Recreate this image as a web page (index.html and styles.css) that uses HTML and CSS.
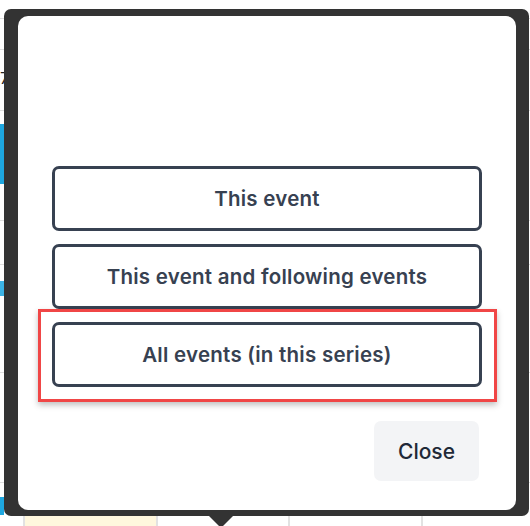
FILE: index.html
```html
<!DOCTYPE html>
<html lang="en">
<head>
<meta charset="utf-8">
<title>Edit recurring event</title>
<link rel="stylesheet" href="styles.css">
</head>
<body>
<div class="calendar">
  <div class="cal-row r1"><div class="cell time"></div></div>
  <div class="cal-row r2"><div class="cell time"></div></div>
  <div class="cal-row r3"><div class="cell time"><span class="label">7</span></div></div>
  <div class="cal-row r4"><div class="cell time"><div class="event"></div></div></div>
  <div class="cal-row r5"><div class="cell time"></div></div>
  <div class="cal-row r6"><div class="cell time"><div class="mark"></div></div></div>
  <div class="cal-row r7"><div class="cell time"></div></div>
  <div class="cal-row r8"><div class="cell time"><div class="mark low"></div></div><div class="cell day today"></div><div class="cell day"></div><div class="cell day"></div><div class="cell day"></div></div>

  <div class="popover">
    <div class="dialog">
      <div class="choices">
        <button class="choice">This event</button>
        <button class="choice">This event and following events</button>
        <button class="choice highlighted">All events (in this series)</button>
      </div>
      <div class="footer">
        <button class="close">Close</button>
      </div>
    </div>
  </div>
</div>
</body>
</html>
```

FILE: styles.css
```css
* { box-sizing: border-box; }
html, body { margin: 0; padding: 0; }
body {
  width: 530px;
  height: 526px;
  overflow: hidden;
  background: #ffffff;
  font-family: Inter, "Noto Sans", "Liberation Sans", sans-serif;
}

.calendar {
  position: relative;
  width: 530px;
  height: 526px;
  display: flex;
  flex-direction: column;
  overflow: hidden;
}
.cal-row {
  display: grid;
  grid-template-columns: 23px 133px 132px 133px 1fr;
  border-bottom: 1px solid #dedede;
}
.r1 { height: 19px; }
.r2 { height: 31px; }
.r3 { height: 61px; }
.r4 { height: 110px; }
.r5 { height: 44px; }
.r6 { height: 108px; }
.r7 { height: 110px; }
.r8 { flex: 1; border-bottom: none; }
.cell { position: relative; }
.cell.day { border-left: 2px solid #e2e2e2; }
.cell.today { background: #fff7dd; }
.label {
  display: block;
  padding-top: 20px;
  font-size: 16px;
  color: #222;
  line-height: 1;
}
.event {
  margin-top: 13px;
  height: 60px;
  background: #1ea7e0;
}
.mark {
  margin-top: 16px;
  width: 4px;
  height: 15px;
  background: #3cb4e6;
}
.mark.low { margin-top: 14px; height: 18px; background: #1ea7e0; }

.popover {
  position: absolute;
  left: 4px;
  top: 9px;
  width: 525px;
  height: 507px;
  padding: 7px 13px 6px 14px;
  background: #333333;
  border-radius: 7px;
}
.popover::after {
  content: "";
  position: absolute;
  left: 205px;
  bottom: -12px;
  border-left: 12px solid transparent;
  border-right: 12px solid transparent;
  border-top: 12px solid #333333;
}

.dialog {
  height: 100%;
  background: #ffffff;
  border-radius: 10px;
  padding: 150px 34px 29px 34px;
  display: flex;
  flex-direction: column;
}
.choices {
  display: flex;
  flex-direction: column;
  gap: 13px;
}
.choice {
  position: relative;
  height: 65px;
  background: #ffffff;
  border: 3px solid #374151;
  border-radius: 7px;
  font-family: inherit;
  font-size: 20.5px;
  font-weight: 600;
  letter-spacing: 0.25px;
  color: #374151;
  cursor: pointer;
}
.choice.highlighted::after {
  content: "";
  position: absolute;
  left: -17px;
  right: -18px;
  top: -16px;
  bottom: -18px;
  border: 3px solid #f04646;
  box-shadow: 0 3px 6px rgba(0, 0, 0, 0.25);
  pointer-events: none;
}
.footer {
  margin-top: auto;
  display: flex;
  justify-content: flex-end;
  padding-right: 3px;
}
.close {
  width: 105px;
  height: 60px;
  border: none;
  border-radius: 7px;
  background: #f3f4f6;
  font-family: inherit;
  font-size: 21px;
  font-weight: 500;
  color: #1f2937;
  cursor: pointer;
}
```
